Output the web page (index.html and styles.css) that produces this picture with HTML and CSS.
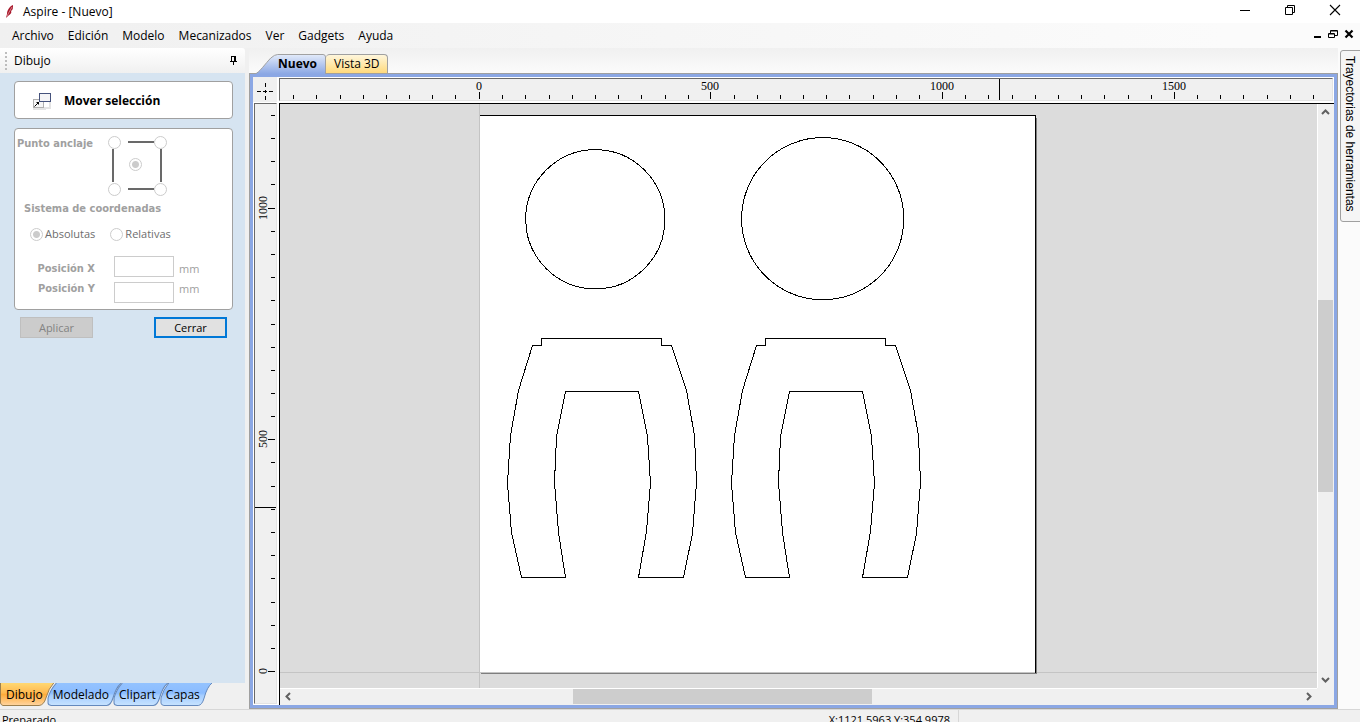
FILE: index.html
```
<!DOCTYPE html>
<html lang="es">
<head>
<meta charset="utf-8">
<title>Aspire - [Nuevo]</title>
<link rel="stylesheet" href="styles.css">
</head>
<body>
<div class="app">
  <header class="titlebar">
    <svg class="logo" width="8" height="14" viewBox="0 0 8 14"><path d="M7 0C4 1 1 5 1 9L0 13 2 11C5 9 6 7 5 6 7 5 7 3 7 0Z" fill="#a8192c"/><path d="M6 2L1 11" stroke="#e9a8ae" stroke-width=".7"/></svg>
    <h1 class="title">Aspire - [Nuevo]</h1>
    <div class="window-controls">
      <button class="win-btn" aria-label="Minimizar"><svg width="12" height="12" viewBox="0 0 12 12"><path d="M1 6.500H11" stroke="#000"/></svg></button>
      <button class="win-btn" aria-label="Restaurar"><svg width="12" height="12" viewBox="0 0 12 12"><path d="M1.500 3.500H8.500V10.500H1.500ZM3.500 3.500V1.500H10.500V8.500H8.500" fill="none" stroke="#000"/></svg></button>
      <button class="win-btn" aria-label="Cerrar ventana"><svg width="12" height="12" viewBox="0 0 12 12"><path d="M1 1L11 11M11 1L1 11" stroke="#000" stroke-width="1.100"/></svg></button>
    </div>
  </header>

  <nav class="menubar">
    <button class="menu">Archivo</button>
    <button class="menu">Edición</button>
    <button class="menu">Modelo</button>
    <button class="menu">Mecanizados</button>
    <button class="menu">Ver</button>
    <button class="menu">Gadgets</button>
    <button class="menu">Ayuda</button>
    <div class="doc-controls">
      <button class="doc-btn" aria-label="Minimizar documento"><svg width="10" height="10" viewBox="0 0 10 10"><path d="M2 8H9" stroke="#000" stroke-width="2"/></svg></button>
      <button class="doc-btn" aria-label="Restaurar documento"><svg width="10" height="10" viewBox="0 0 10 10"><path d="M2.500 4V1.500H9.500V6.500H7M3 2H9M.5 4.500H6.500V8.500H.5ZM1 5H6" fill="none" stroke="#000"/></svg></button>
      <button class="doc-btn" aria-label="Cerrar documento"><svg width="10" height="10" viewBox="0 0 10 10"><path d="M1.500 1.500L8.500 8.500M8.500 1.500L1.500 8.500" stroke="#000" stroke-width="2.200"/></svg></button>
    </div>
  </nav>

  <main class="workspace">
    <aside class="side">
      <div class="side-head">
        <span class="grip"></span>
        <h2 class="side-title">Dibujo</h2>
        <button class="pin" aria-label="Anclar panel"><svg width="9" height="11" viewBox="0 0 9 11"><path d="M2.500 6V1.500H6.500V6M5.500 1V6M1 6.500H8M4.500 7V10" fill="none" stroke="#000" shape-rendering="crispEdges"/></svg></button>
      </div>
      <form class="side-body">
        <div class="card tool-name">
          <svg width="20" height="18" viewBox="0 0 20 18"><path d="M1 17H13V16H18V10" fill="none" stroke="#e4e4e4" stroke-width="2"/><rect x="1.500" y="7.500" width="10" height="8" fill="#f6f6f6" stroke="#b0b0b0"/><rect x="7.500" y="1.500" width="11" height="8" fill="#f4f4f6" stroke="#45527c"/><path d="M2.500 14.500L6 11" stroke="#000"/><path d="M4 10H7V13Z"/></svg>
          <h3 class="tool-title">Mover selección</h3>
        </div>

        <div class="card options">
          <div class="anchor-row">
            <span class="label">Punto anclaje</span>
            <div class="anchor">
              <svg class="anchor-lines" width="60" height="60" viewBox="0 0 60 60"><path d="M20 6H46M20 53H46M5 13V46M53 13V46" stroke="#696969" stroke-width="2"/></svg>
              <input class="radio" type="radio" name="anchor" aria-label="Superior izquierda" disabled>
              <input class="radio top-right" type="radio" name="anchor" aria-label="Superior derecha" disabled>
              <input class="radio center" type="radio" name="anchor" aria-label="Centro" checked disabled>
              <input class="radio bottom-left" type="radio" name="anchor" aria-label="Inferior izquierda" disabled>
              <input class="radio bottom-right" type="radio" name="anchor" aria-label="Inferior derecha" disabled>
            </div>
          </div>
          <div class="label system">Sistema de coordenadas</div>
          <div class="choices">
            <label class="choice"><input class="radio" type="radio" name="system" checked disabled>Absolutas</label>
            <label class="choice"><input class="radio" type="radio" name="system" disabled>Relativas</label>
          </div>
          <div class="position">
            <div class="names">
              <label class="label" for="pos-x">Posición X</label>
              <label class="label" for="pos-y">Posición Y</label>
            </div>
            <div class="fields">
              <input class="field" id="pos-x" type="text" disabled>
              <input class="field" id="pos-y" type="text" disabled>
            </div>
            <div class="units"><span>mm</span><span>mm</span></div>
          </div>
        </div>

        <div class="actions">
          <button class="btn" type="button" disabled>Aplicar</button>
          <button class="btn primary" type="button">Cerrar</button>
        </div>
      </form>
      <nav class="side-tabs">
        <button class="side-tab current"><svg class="shape" viewBox="0 0 56 23" preserveAspectRatio="none"><defs><linearGradient id="orange" x2="0" y2="1"><stop offset="0" stop-color="#ffd873"/><stop offset=".45" stop-color="#ffb850"/><stop offset=".5" stop-color="#ffab38"/><stop offset="1" stop-color="#ffd5a2"/></linearGradient></defs><path d="M.5 0V20Q1 22 3 22.500H40Q45 22 47 15Q50 5 55 0" fill="url(#orange)" stroke="#9b7d4c"/></svg><span>Dibujo</span></button>
        <button class="side-tab"><svg class="shape" viewBox="0 0 71 23" preserveAspectRatio="none"><defs><linearGradient id="blue" x2="0" y2="1"><stop offset="0" stop-color="#94c3ff"/><stop offset=".45" stop-color="#8bbcff"/><stop offset=".55" stop-color="#a5cdff"/><stop offset="1" stop-color="#c7e3ff"/></linearGradient></defs><path d="M9 0Q3 7 1 15V20Q1 22 4 22.500H57Q61 22 63 15Q66 4 71 0" fill="url(#blue)" stroke="#6489bd"/></svg><span>Modelado</span></button>
        <button class="side-tab"><svg class="shape" viewBox="0 0 53 23" preserveAspectRatio="none"><path d="M9 0Q3 7 1 15V20Q1 22 4 22.500H39Q43 22 45 15Q48 4 53 0" fill="url(#blue)" stroke="#6489bd"/></svg><span>Clipart</span></button>
        <button class="side-tab"><svg class="shape" viewBox="0 0 53 23" preserveAspectRatio="none"><path d="M9 0Q3 7 1 15V20Q1 22 4 22.500H39Q43 22 45 15Q48 4 53 0" fill="url(#blue)" stroke="#6489bd"/></svg><span>Capas</span></button>
      </nav>
    </aside>

    <section class="document">
      <div class="doc-tabs">
        <button class="doc-tab active"><svg class="shape" viewBox="0 0 72 20" preserveAspectRatio="none"><defs><linearGradient id="tab-blue" x2="0" y2="1"><stop offset="0" stop-color="#e3ebfa"/><stop offset="1" stop-color="#8ba7e4"/></linearGradient></defs><path d="M0 20C4 19 11 9 16 4Q20 .5 23 .5H69Q71.500 .5 71.500 3V20" fill="url(#tab-blue)" stroke="#a0a0a0"/></svg><span>Nuevo</span></button>
        <button class="doc-tab other">Vista 3D</button>
      </div>
      <div class="frame">
        <div class="corner"><svg width="17" height="17" viewBox="0 0 17 17"><path d="M0 8.500H4M6 8.500H10M12 8.500H16M8.500 0V4M8.500 7V10M8.500 13V17" stroke="#000" shape-rendering="crispEdges"/></svg></div>
        <div class="ruler across">
          <svg class="fill">
            <path class="tick" transform="translate(.5 0)" d="M13 16v4M36 16v4M60 16v4M83 16v4M106 16v4M129 16v4M152 16v4M175 16v4M199 13v7M222 16v4M245 16v4M269 16v4M292 16v4M315 16v4M338 16v4M361 16v4M385 16v4M408 16v4M430 13v7M454 16v4M477 16v4M500 16v4M523 16v4M546 16v4M569 16v4M593 16v4M616 16v4M639 16v4M662 13v7M685 16v4M708 16v4M732 16v4M755 16v4M778 16v4M801 16v4M824 16v4M848 16v4M871 16v4M894 13v7M917 16v4M940 16v4M963 16v4M987 16v4M1010 16v4M1033 16v4M719 0v21"/>
            <g class="mark"><text x="199" y="11">0</text><text x="430" y="11">500</text><text x="662" y="11">1000</text><text x="894" y="11">1500</text></g>
          </svg>
        </div>
        <div class="ruler down">
          <svg class="fill">
            <path class="tick" transform="translate(0 .5)" d="M16 11h4M16 34h4M16 57h4M16 80h4M13 104h7M16 127h4M16 150h4M16 173h4M16 196h4M16 220h4M16 243h4M16 266h4M16 289h4M16 312h4M13 335h7M16 358h4M16 382h4M16 405h4M0 403h21M16 428h4M16 451h4M16 474h4M16 498h4M16 521h4M16 544h4M13 567h7"/>
            <g class="mark"><text transform="translate(12 104) rotate(-90)">1000</text><text transform="translate(12 335) rotate(-90)">500</text><text transform="translate(12 567) rotate(-90)">0</text></g>
          </svg>
        </div>
        <div class="view">
          <div class="canvas">
            <svg class="fill">
              <g transform="translate(-279.500 -103.500)" shape-rendering="crispEdges">
                <rect x="479.500" y="115.500" width="556" height="557" fill="#fff"/>
                <path d="M479 103V690M279 672H1320" stroke="#c4c4c4"/>
                <path d="M480 673H1036.500M1036 117V673" stroke="#7e7e7e"/>
                <path d="M479.500 115H1035V672" class="cut"/>
                <circle class="cut" cx="594.800" cy="218.800" r="69.600"/>
                <circle class="cut" cx="822.200" cy="218.200" r="81.100"/>
                <path id="leg" class="cut" d="M532 345H541V338H661V345H671L686 390 694 435 696 482 692 533 683 577H638L646 531 650 483 647 436 638 391H565L556 436 554 482 558 532 565 577H521L511 532 507 483 510 435 518 390Z"/>
                <use href="#leg" x="224"/>
              </g>
            </svg>
          </div>
          <div class="scroll vertical">
            <svg width="9" height="9" viewBox="0 0 9 9"><path d="M1 6L4.500 2.500 8 6" class="arrow"/></svg>
            <div class="track"><div class="thumb"></div></div>
            <svg width="9" height="9" viewBox="0 0 9 9"><path d="M1 3L4.500 6.500 8 3" class="arrow"/></svg>
          </div>
          <div class="scroll horizontal">
            <svg width="9" height="9" viewBox="0 0 9 9"><path d="M6 1L2.500 4.500 6 8" class="arrow"/></svg>
            <div class="track"><div class="thumb"></div></div>
            <svg width="9" height="9" viewBox="0 0 9 9"><path d="M3 1L6.500 4.500 3 8" class="arrow"/></svg>
          </div>
        </div>
      </div>
    </section>

    <aside class="rail"><button class="rail-tab">Trayectorias de herramientas</button></aside>
  </main>

  <footer class="status"><span class="ready">Preparado</span><span class="coords">X:1121.5963 Y:354.9978</span></footer>
</div>
</body>
</html>
```
FILE: styles.css
```
* { box-sizing: border-box; }
body { margin: 0; overflow: hidden; font: 12px/16px "Open Sans", "Noto Sans", sans-serif; color: #000; }
button { margin: 0; padding: 0; border: 0; background: none; font: inherit; color: inherit; }
h1, h2, h3 { margin: 0; font-size: 12px; font-weight: 400; }
svg { display: block; flex: none; }

.app { display: grid; grid-template-rows: 23px 25px minmax(0, 1fr) 13px; height: 100vh; background: #f0f0f0; }

.titlebar { display: flex; align-items: center; background: #fff; padding-left: 6px; }
.title { margin-left: 9px; flex: 1; }
.window-controls { display: flex; align-self: flex-start; margin-right: 3px; }
.win-btn { display: grid; place-items: center; width: 45px; height: 20px; }

.menubar { display: flex; align-items: center; gap: 14px; padding: 0 6px 0 12px; background: linear-gradient(90deg, #f0f0f0, #fbfbfb 90%); }
.doc-controls { display: flex; gap: 6px; margin-left: auto; padding-bottom: 3px; }

.workspace { display: grid; grid-template-columns: 245px minmax(0, 1fr) 22px; }

.side { display: flex; flex-direction: column; padding-bottom: 3px; }
.side-head { display: flex; align-items: center; height: 25px; padding: 0 7px 0 5px; background: linear-gradient(#fff, #f0f0f0); border-top-right-radius: 3px; }
.grip { width: 2px; height: 18px; margin-right: 7px; background: repeating-linear-gradient(#bdbdbd 0 2px, transparent 2px 4px); }
.side-title { flex: 1; }
.side-body { flex: 1; padding: 8px 12px 0 14px; background: #d6e4f1; font-size: 11px; }
.card { background: #fff; border: 1px solid #a0a0a0; border-radius: 4px; }
.tool-name { display: flex; align-items: center; gap: 12px; height: 38px; padding: 2px 0 0 17px; }
.tool-title { font-weight: 700; }

.options { margin-top: 9px; height: 182px; padding: 7px 2px; }
.label { color: #a0a0a0; font: bold 11px/16px "DejaVu Sans Condensed", "DejaVu Sans", sans-serif; }
.anchor-row { display: flex; justify-content: space-between; padding-right: 63px; }
.anchor { position: relative; display: grid; grid-template: 18px 20px 22px / 18px 19px 22px; height: 60px; }
.anchor-lines { position: absolute; inset: 0; }
.radio { appearance: none; position: relative; width: 13px; height: 13px; margin: 0; border: 1px solid #ccc; border-radius: 50%; background: #fff; }
.radio:checked { background: radial-gradient(circle, #ccc 3px, #fff 4px); }
.top-right { grid-area: 1 / 3; justify-self: end; }
.center { grid-area: 2 / 2; place-self: center; }
.bottom-left { grid-area: 3 / 1; align-self: end; }
.bottom-right { grid-area: 3 / 3; place-self: end; }
.system { margin: 5px 0 0 7px; }
.choices { display: flex; gap: 15px; margin: 9px 0 0 13px; color: #6d6d6d; }
.choice { display: flex; align-items: center; gap: 2px; }
.position { display: flex; margin-top: 14px; color: #a0a0a0; }
.names { display: flex; flex-direction: column; width: 78px; padding-top: 3px; text-align: right; }
.names .label, .units span { line-height: 20px; }
.fields { display: flex; flex-direction: column; gap: 5px; margin: 0 5px 0 19px; }
.field { width: 60px; height: 21px; border: 1px solid #ccc; background: #fff; padding: 0 3px; }
.units { display: flex; flex-direction: column; padding-top: 3px; }
.actions { display: flex; justify-content: space-between; padding: 7px 6px; }
.btn { width: 73px; height: 21px; border: 1px solid #bfbfbf; background: #ccc; color: #838383; }
.primary { border: 2px solid #0078d7; background: #e1e1e1; color: #000; }

.side-tabs { display: flex; height: 23px; }
.side-tab { position: relative; margin-right: -8px; padding: 0 12px 0 6px; }
.current { z-index: 1; }
.shape { position: absolute; inset: 0; width: 100%; height: 100%; }
.side-tab span, .doc-tab span { position: relative; }

.document { display: flex; flex-direction: column; min-width: 0; margin-left: 4px; }
.doc-tabs { display: flex; align-items: flex-end; height: 25px; padding-left: 6px; background: linear-gradient(#f0f0f0, #fbfbfb); }
.doc-tab { position: relative; height: 19px; }
.active { height: 20px; margin-bottom: -1px; padding: 0 9px 0 23px; font-weight: 700; z-index: 1; }
.other { padding: 0 7px 0 8px; border: 1px solid #a0a0a0; border-width: 1px 1px 0 0; border-radius: 4px 4px 0 0; background: linear-gradient(#fef6dc, #ffda7c); }
.frame { flex: 1; min-height: 0; display: grid; grid-template: 26px minmax(0, 1fr) / 26px minmax(0, 1fr); border: 4px solid #8ba7e4; outline: 1px solid #a0a0a0; outline-offset: -1px; background: #fff; }
.corner { display: grid; place-items: center; background: #f0f0f0; margin: 0 2px 1px 0; padding-top: 3px; }
.ruler { background: #f0f0f0; border: 1px solid #696969; border-right-color: #e3e3e3; border-bottom-color: #e3e3e3; }
.across { margin: 1px 1px 2px 0; }
.down { margin: 0 2px 1px 1px; }
.fill { width: 100%; height: 100%; overflow: hidden; }
.tick { stroke: #000; shape-rendering: crispEdges; }
.mark { font: 12px "Liberation Serif", serif; text-anchor: middle; }
.view { display: grid; grid-template: minmax(0, 1fr) 16px / minmax(0, 1fr) 16px; padding: 0 1px 1px 0; border: solid #000; border-width: 1px 0 0 1px; background: #f0f0f0; }
.canvas { min-width: 0; background: #dcdcdc; }
.cut { fill: none; stroke: #000; }
.scroll { display: flex; align-items: center; }
.vertical { flex-direction: column; border-left: 1px solid #fff; padding: 4px 0; }
.horizontal { border-top: 1px solid #fff; padding: 0 4px; }
.track { display: flex; flex: 1; align-self: stretch; min-width: 0; min-height: 0; }
.vertical .track { flex-direction: column; }
.thumb { background: #cdcdcd; }
.vertical .thumb { margin-top: 183px; height: 192px; }
.horizontal .thumb { margin-left: 280px; width: 299px; }
.arrow { fill: none; stroke: #606060; stroke-width: 2; }

.rail { padding: 2px 0 0 2px; background: #fbfbfb; }
.rail-tab { writing-mode: vertical-rl; width: 24px; height: 172px; padding: 5px 5px 5px 0; text-align: left; font: 12px/16px "Liberation Sans", sans-serif; border: 1px solid #a0a0a0; border-radius: 3px 0 0 3px; background: #f5f5f5; }

.status { display: flex; overflow: hidden; border-top: 1px solid #d7d7d7; font-size: 11px; line-height: 19px; }
.ready { flex: 1; padding-left: 2px; }
.coords { margin-right: 401px; padding-right: 8px; border-right: 1px solid #d7d7d7; }
```
